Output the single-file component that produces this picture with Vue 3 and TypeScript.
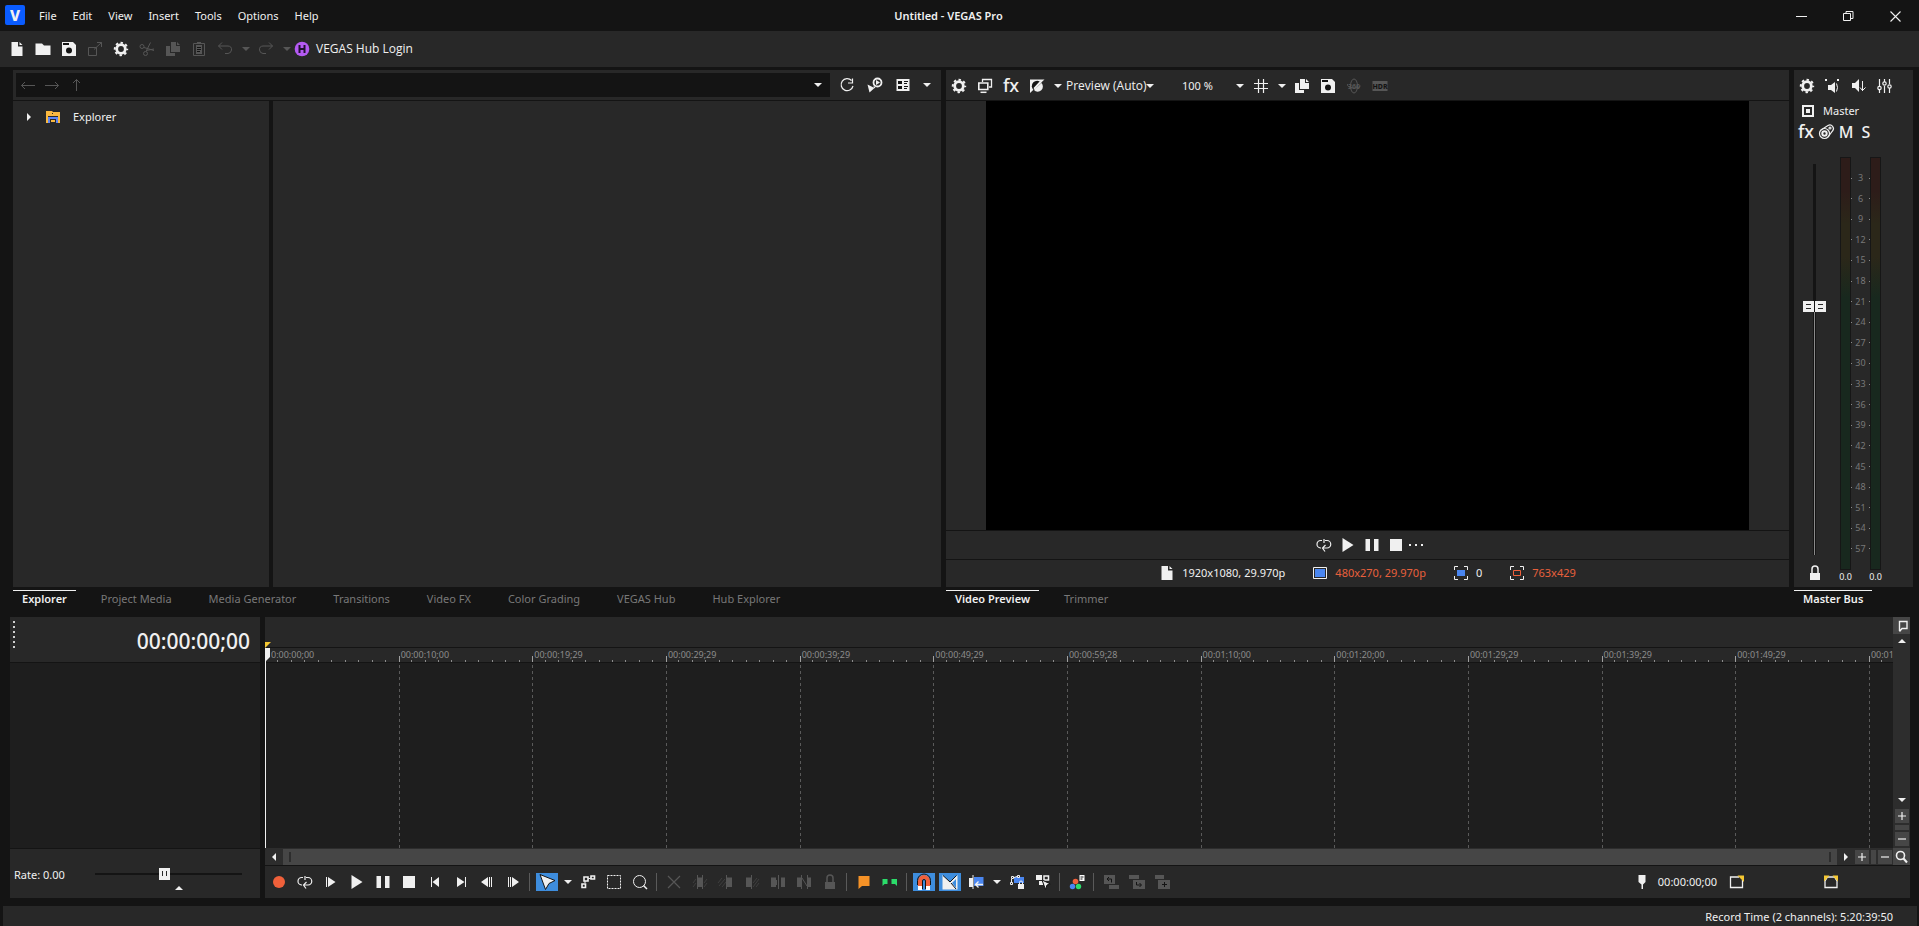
<script setup lang="ts">
import { h, ref } from 'vue'

const dark = '#141414'

const icons: Record<string, string> = {
  doc: `<path fill="currentColor" d="M2.500 1H9V5.500H13.500V15H2.500Z M10.500 1 13.500 4H10.500Z"/>`,
  folder: `<path fill="currentColor" d="M0.500 2.500H7L9 4.500H15.500V14H0.500Z"/>`,
  save: `<path fill="currentColor" d="M1 1H12L15 4V15H1Z"/><path fill="${dark}" d="M2 2H8V4H2Z"/><circle cx="8" cy="9.500" r="3" fill="${dark}"/>`,
  external: `<path fill="none" stroke="currentColor" d="M1.500 6.500h8v8h-8z M7 8.500 14.500 1.500 M10 1.500h4.500V6"/>`,
  gear: `<circle cx="8" cy="8" r="4.300" fill="none" stroke="currentColor" stroke-width="2.800"/><circle cx="8" cy="8" r="6.200" fill="none" stroke="currentColor" stroke-width="2" stroke-dasharray="2.430 2.440" stroke-dashoffset="1.215"/>`,
  cut: `<g fill="none" stroke="currentColor"><circle cx="3" cy="5.500" r="2"/><circle cx="6.500" cy="12.500" r="2"/><path d="M5 6.500 15 9.500 M7 10.500 11.500 1.500 M7 9.500 15 8"/></g>`,
  copy: `<path fill="currentColor" d="M6 1H11V5H15V11H6Z M12 1 15 4H12Z M1 5H5V12H10V15H1Z"/>`,
  paste: `<path fill="none" stroke="currentColor" d="M2.500 2.500h11v12h-11z"/><path fill="currentColor" d="M6 1h4v2H6z M5 4h6v9H5z"/><path stroke="${dark}" d="M6 6.500h4 M6 8.500h4 M6 10.500h3"/>`,
  undo: `<path fill="none" stroke="currentColor" d="M5 1.500 1.500 5 5 8.500 M1.500 5H11a3.700 3.700 0 0 1 3.500 4A4 4 0 0 1 11 12.500H8"/>`,
  redo: `<path fill="none" stroke="currentColor" d="M11 1.500 14.500 5 11 8.500 M14.500 5H5A3.700 3.700 0 0 0 1.500 9 4 4 0 0 0 5 12.500H8"/>`,
  down: `<path fill="currentColor" d="M4 6H12L8 10Z"/>`,
  up: `<path fill="currentColor" d="M4 10H12L8 6Z"/>`,
  left: `<path fill="currentColor" d="M10 4V12L6 8Z"/>`,
  right: `<path fill="currentColor" d="M6 4V12L10 8Z"/>`,
  hub: `<circle cx="8" cy="8" r="7.300" fill="#b45af2"/><path stroke="#201030" stroke-width="2" d="M5.500 4v8 M10.500 4v8 M5 8h6"/>`,
  back: `<path fill="none" stroke="currentColor" d="M15 8.500H1.500 M5 5 1.500 8.500 5 12"/>`,
  forward: `<path fill="none" stroke="currentColor" d="M1 8.500H14.500 M11 5 14.500 8.500 11 12"/>`,
  upDir: `<path fill="none" stroke="currentColor" d="M8.500 14V2.500 M5 6 8.500 2.500 12 6"/>`,
  refresh: `<path fill="none" stroke="currentColor" stroke-width="1.200" d="M12.500 3.500A6 6 0 1 0 14 9 M13.500 1.500V6H9"/>`,
  preview: `<path fill="currentColor" d="M0.500 7.500 7.500 11 2.500 15.500Z M6.500 8.500 8.500 10.500 7 11.500Z"/><circle cx="10.500" cy="5.500" r="4" fill="none" stroke="currentColor" stroke-width="1.800"/><path fill="currentColor" d="M9 3V8L13 5.500Z"/>`,
  views: `<path fill="currentColor" d="M1.500 2h13v12h-13z"/><path fill="${dark}" d="M3 4h4v3H3z M9 4h4v1H9z M9 6h3v1H9z M3 9h4v3H3z M9 9h4v1H9z M9 11h3v1H9z"/>`,
  monitor: `<path fill="none" stroke="currentColor" stroke-width="1.300" d="M5.500 4V1.500H14.500V9H12"/><path fill="none" stroke="currentColor" stroke-width="1.600" d="M1.800 5h9v6.500h-9z"/><path stroke="currentColor" stroke-width="1.500" d="M3.500 14.300h6"/>`,
  fx: `<text x="8" y="14" text-anchor="middle" font-family="Noto Sans, sans-serif" font-size="18" font-weight="500" fill="currentColor">fx</text>`,
  split: `<path fill="currentColor" d="M1 1.500H15.500L1 15Z"/><path fill="${dark}" d="M12 4.200A5.300 5.300 0 0 0 4.500 12Z"/><path fill="currentColor" d="M12.500 5A5 5 0 0 1 5 12Z M11 3 12.500 4.500 5.500 11.500 4.500 10Z"/>`,
  grid: `<path stroke="currentColor" stroke-width="1.200" d="M5.500 1v14 M10.500 1v14 M1 5.500h14 M1 10.500h14"/>`,
  vr: `<g fill="none" stroke="currentColor"><ellipse cx="8" cy="8" rx="3.500" ry="7"/><path d="M1.500 6c-1 5 11 5 13 2"/></g><text x="8" y="10.500" text-anchor="middle" font-family="Noto Sans, sans-serif" font-size="7" font-weight="700" fill="currentColor">360</text>`,
  hdr: `<path fill="currentColor" d="M0.500 3h15v10h-15z"/><text x="8" y="11" text-anchor="middle" font-family="Noto Sans, sans-serif" font-size="7" font-weight="800" fill="${dark}">HDR</text>`,
  loop: `<path fill="none" stroke="currentColor" stroke-width="1.200" d="M6 3.500H5A3.700 3.700 0 0 0 4.500 11H5 M9 3.500H11A3.700 3.700 0 0 1 11 11H7 M9.500 8 6.500 11 9 14.500 M8 2V6"/>`,
  play: `<path fill="currentColor" d="M2.500 1V15L13.500 8Z"/>`,
  pause: `<path fill="currentColor" d="M1.500 2H6V14H1.500Z M10 2H14.500V14H10Z"/>`,
  stop: `<path fill="currentColor" d="M2 2H14V14H2Z"/>`,
  dots: `<path fill="currentColor" d="M1 7h2v2H1z M7 7h2v2H7z M13 7h2v2h-2z"/>`,
  frame: `<path fill="none" stroke="currentColor" d="M1.500 2.500h13v11h-13z"/><path fill="#4a86f0" d="M3 4h10v8H3z"/>`,
  display: `<path fill="none" stroke="currentColor" d="M1.500 5V1.500H5 M11 1.500h3.500V5 M14.500 11v3.500H11 M5 14.500H1.500V11"/><path fill="#4a86f0" d="M4 5h8v6H4z"/>`,
  target: `<path fill="none" stroke="currentColor" d="M1.500 5V1.500H5 M11 1.500h3.500V5 M14.500 11v3.500H11 M5 14.500H1.500V11"/><path fill="none" stroke="#f0603a" d="M4.500 5.500h7v5h-7z"/>`,
  speaker: `<path fill="currentColor" d="M0 1h2v2H0z M12 1h2v2h-2z M3 7h3l4-3v11l-4-3H3z"/><path fill="none" stroke="currentColor" d="M11.500 5.500q2 4 0 8"/>`,
  dim: `<path fill="currentColor" d="M1 5h3l4-4v13l-4-4H1z"/><path fill="none" stroke="currentColor" d="M11.500 3v10 M9 9.500l2.500 3 3-3"/>`,
  mixer: `<g fill="none" stroke="currentColor" stroke-width="1.200"><path d="M2.500 1v7 M2.500 12v3 M7.500 1v3 M7.500 8v7 M12.500 1v5 M12.500 10v5"/><circle cx="2.500" cy="10" r="1.700"/><circle cx="7.500" cy="5.500" r="1.700"/><circle cx="12.500" cy="8.500" r="1.700"/></g>`,
  master: `<path fill="none" stroke="currentColor" stroke-width="2" d="M3 3h10v10H3z"/><path fill="currentColor" d="M6 6h4v4H6z"/>`,
  automation: `<g fill="none" stroke="currentColor" stroke-width="1.200"><circle cx="6.500" cy="9.500" r="5"/><circle cx="6.500" cy="9.500" r="2.200" stroke-width="2"/><path d="M3 6 10 1.500A3.600 3.600 0 0 1 14.500 7L10 13"/><circle cx="12" cy="4" r="1"/></g>`,
  lock: `<path fill="none" stroke="currentColor" stroke-width="1.500" d="M5 8V4a3 3 0 0 1 6 0v4"/><path fill="currentColor" d="M3 8h10v7H3z"/>`,
  record: `<circle cx="8" cy="8" r="6" fill="#f0603a"/>`,
  playStart: `<path fill="currentColor" d="M3 3h1v10H3z M5 3v10l7.500-5z"/>`,
  goStart: `<path fill="currentColor" d="M4 3h1v10H4z M12 3v10L5.500 8z"/>`,
  goEnd: `<path fill="currentColor" d="M12 3h1v10h-1z M4 3v10l7.500-5z"/>`,
  prevFrame: `<path fill="currentColor" d="M2 8 9 3v10z M10 3h1v10h-1z M12 3h1v10h-1z"/>`,
  nextFrame: `<path fill="currentColor" d="M14 8 7 3v10z M5 3h1v10H5z M3 3h1v10H3z"/>`,
  pointer: `<path fill="#f0f0f0" stroke="${dark}" d="M1 0.500 16 6.500 10 9.500 6.500 15.500Z"/>`,
  envelope: `<path fill="none" stroke="currentColor" stroke-width="1.600" d="M2 10h3.500v3.500H2z M4 3h4v4H4z M11 2h3.500v3H11z"/><path stroke="currentColor" d="M5 9V7 M8 5 11 4"/>`,
  marquee: `<path fill="none" stroke="currentColor" stroke-dasharray="2 1" d="M1.500 1.500h13v13h-13z"/>`,
  zoom: `<circle cx="7.500" cy="7.500" r="6" fill="none" stroke="currentColor"/><path stroke="currentColor" stroke-width="1.500" d="M11.500 11.500 15 15"/>`,
  remove: `<path stroke="currentColor" stroke-width="1.200" d="M2 2l12 12 M14 2 2 14"/>`,
  trim: `<path fill="currentColor" d="M5 3.500h6v9.500H5z"/><path stroke="currentColor" d="M5.500 1v14 M10.500 1v14"/><path stroke="currentColor" opacity="0.500" d="M1 9l3-4 M1 13l3-4 M12 9l3-4 M12 13l3-4"/>`,
  trimStart: `<path fill="currentColor" d="M8 3.500h6v9.500H8z"/><path stroke="currentColor" d="M8.500 1v14"/><path stroke="currentColor" opacity="0.500" d="M0 9l4-5 M1 12l6-7 M4 13l4-5"/>`,
  trimEnd: `<path fill="currentColor" d="M2 3.500h6v9.500H2z"/><path stroke="currentColor" d="M7.500 1v14"/><path stroke="currentColor" opacity="0.500" d="M9 9l4-5 M9 13l6-8 M12 13l3-4"/>`,
  cutEvent: `<path fill="currentColor" d="M1 3.500h5v9.500H1z M11 3.500h4v9.500h-4z M8 1h1v14H8z M6 6h1v5H6z"/>`,
  heal: `<path fill="currentColor" d="M1 3.500h4v9.500H1z M12 3.500h3v9.500h-3z"/><path stroke="currentColor" d="M5.500 1v14 M11.500 1v14 M6 4l5 8"/>`,
  flag: `<path fill="#f59227" d="M2.500 2H13.500V12H6L2.500 15Z"/>`,
  region: `<path fill="#2bdc6a" d="M0.500 5h5v5h-3L0.500 12Z M9.500 5H15v7l-2-2H9.500Z"/>`,
  magnet: `<path fill="none" stroke="#f0603a" stroke-width="4" d="M4 12V7a4 4 0 0 1 8 0v5"/><path fill="#fff" d="M2 12h4v4H2z M10 12h4v4h-4z"/><path fill="none" stroke="${dark}" d="M1.500 11V6.500a6.500 6.500 0 0 1 13 0V11 M6.500 15V7a1.500 1.500 0 0 1 3 0v8"/>`,
  crossfade: `<path fill="#f0f0f0" d="M0.500 1 8 8 15.500 1V15.500H0.500Z"/><path fill="none" stroke="${dark}" d="M1 1.500 8 8 14.500 1.500 M9 9 14 15"/><path fill="#3e8ddd" d="M10 9 14 5V14Z"/>`,
  ripple: `<path fill="currentColor" d="M1 4h4v9H1z M4.500 1h1v14h-1z"/><path fill="#4a86f0" d="M6 3h9.500v9H6z"/><path stroke="currentColor" stroke-width="1.300" fill="none" d="M15 10.500H7.500 M10.500 7.500 7.500 10.500 10.500 13.500"/>`,
  lockEnv: `<path fill="#4a86f0" d="M5 3h10v6H5z"/><path fill="none" stroke="currentColor" d="M1.500 8.500h2v2h-2z M2.500 2.500h2v2h-2z M8.500 1.500h2v2h-2z M2.500 8V5 M5 3.500 8 2.500"/><path fill="currentColor" d="M9 10h6v5H9z"/><path fill="none" stroke="currentColor" d="M10.500 10V8.500a1.500 1.500 0 0 1 3 0v1.500"/>`,
  groups: `<path fill="currentColor" d="M1 1h6v5H1z M4 7h4v4H4z"/><path fill="none" stroke="currentColor" stroke-width="1.500" d="M9 2h4.500v4H9z"/><path fill="currentColor" stroke="${dark}" d="M7 6 15.500 10 12 11 10.500 15.500Z"/>`,
  color: `<circle cx="6.500" cy="7.500" r="2.800" fill="#f0603a"/><circle cx="3.500" cy="12.500" r="2.700" fill="#4a86f0"/><circle cx="9.500" cy="12.500" r="2.700" fill="#2bdc6a"/><path fill="#fff" d="M10.500 1h5v6h-5z"/><path stroke="${dark}" d="M11.500 3h3 M11.500 5h2"/>`,
  groupA: `<path fill="currentColor" d="M1 1h11v9H1z M6 11h10v4H6z"/><path fill="none" stroke="${dark}" d="M8.500 8.500V5H4 M6 3 4 5l2 2"/>`,
  groupB: `<path fill="currentColor" d="M0 1h10v4H0z M4 6h12v9H4z"/><path fill="none" stroke="${dark}" d="M7.500 8v3H12 M10.500 9l2 2-2 2"/>`,
  groupC: `<path fill="currentColor" d="M0 1h9v4H0z M3 6h12v9H3z"/><path fill="none" stroke="${dark}" d="M9.500 8v5 M7 10.500h5"/>`,
  marker: `<path fill="currentColor" d="M4.500 1h7v7L9 10.500V15H7.500V10.500L4.500 8Z"/>`,
  loopEnd: `<path fill="none" stroke="currentColor" stroke-width="1.300" d="M10 3H1.500V13.500H13.500V6"/><path fill="#f5c832" d="M8.500 1.500H15V8Z"/>`,
  loopBoth: `<path fill="none" stroke="currentColor" stroke-width="1.300" d="M2 7V13.500H14V7L11.500 3H4.500Z"/><path fill="#f5c832" d="M1 1.500H6.500L1 7.500Z M9.500 1.500H15V7.500Z"/>`,
  flagLine: `<path fill="none" stroke="currentColor" stroke-width="1.400" d="M5.500 13V3.500H13V10.500H8L5.500 13.500"/>`,
  plus: `<path stroke="currentColor" stroke-width="1.200" d="M4 8h8 M8 4v8"/>`,
  minus: `<path stroke="currentColor" stroke-width="1.200" d="M4 8h8"/>`,
  magnify: `<circle cx="6.500" cy="6.500" r="4" fill="none" stroke="currentColor" stroke-width="1.600"/><path stroke="currentColor" stroke-width="2" d="M9.500 9.500 13 13.500"/>`,
  winMin: `<path stroke="currentColor" d="M2 8.500h11"/>`,
  winRestore: `<path fill="none" stroke="currentColor" d="M2.500 5.500h7v7h-7z M5 5V3.500h7v7h-2"/>`,
  winClose: `<path stroke="currentColor" stroke-width="1.100" d="M2.500 3.500l10 10 M12.500 3.500l-10 10"/>`,
  treeFolder: `<path fill="#f9b840" d="M1 2h6l1 1h7v11H1z"/><path fill="#282828" d="M3 7h10v7H3z M7 4h1v1H7z"/><path fill="none" stroke="#5f86f2" stroke-width="2" d="M4 14V9h8v5"/><path fill="#f9b840" d="M6 11h4v2H6z"/>`,
}

const Icon = (props: { name: string }) =>
  h('svg', { class: 'icon', viewBox: '0 0 16 16', 'aria-hidden': 'true', innerHTML: icons[props.name] })
Icon.props = ['name']

interface Tool {
  icon: string
  label: string
  off?: boolean
  on?: boolean
  kind?: 'sep' | 'arrow'
}

const sep: Tool = { icon: '', label: '', kind: 'sep' }
const menu = ['File', 'Edit', 'View', 'Insert', 'Tools', 'Options', 'Help']

const mainTools: Tool[] = [
  { icon: 'doc', label: 'New project' },
  { icon: 'folder', label: 'Open' },
  { icon: 'save', label: 'Save' },
  { icon: 'external', label: 'Render as', off: true },
  { icon: 'gear', label: 'Properties' },
  { icon: 'cut', label: 'Cut', off: true },
  { icon: 'copy', label: 'Copy', off: true },
  { icon: 'paste', label: 'Paste', off: true },
  { icon: 'undo', label: 'Undo', off: true },
  { icon: 'down', label: 'Undo history', kind: 'arrow', off: true },
  { icon: 'redo', label: 'Redo', off: true },
  { icon: 'down', label: 'Redo history', kind: 'arrow', off: true },
]

const previewTools: Tool[] = [
  { icon: 'gear', label: 'Preview properties' },
  { icon: 'monitor', label: 'External monitor' },
  { icon: 'fx', label: 'Output FX' },
  { icon: 'split', label: 'Split screen' },
  { icon: 'down', label: 'Split screen options', kind: 'arrow' },
]

const overlayTools: Tool[] = [
  { icon: 'grid', label: 'Overlays' },
  { icon: 'down', label: 'Overlay options', kind: 'arrow' },
  { icon: 'copy', label: 'Copy snapshot' },
  { icon: 'save', label: 'Save snapshot' },
  { icon: 'vr', label: '360 preview', off: true },
  { icon: 'hdr', label: 'HDR preview', off: true },
]

const previewTransport: Tool[] = [
  { icon: 'loop', label: 'Loop' },
  { icon: 'play', label: 'Play' },
  { icon: 'pause', label: 'Pause' },
  { icon: 'stop', label: 'Stop' },
]

const masterTools: Tool[] = [
  { icon: 'gear', label: 'Audio properties' },
  { icon: 'speaker', label: 'Downmix' },
  { icon: 'dim', label: 'Dim output' },
  { icon: 'mixer', label: 'Mixing console' },
]

const timelineTools: Tool[] = [
  { icon: 'record', label: 'Record' },
  { icon: 'loop', label: 'Loop playback' },
  { icon: 'playStart', label: 'Play from start' },
  { icon: 'play', label: 'Play' },
  { icon: 'pause', label: 'Pause' },
  { icon: 'stop', label: 'Stop' },
  { icon: 'goStart', label: 'Go to start' },
  { icon: 'goEnd', label: 'Go to end' },
  { icon: 'prevFrame', label: 'Previous frame' },
  { icon: 'nextFrame', label: 'Next frame' },
  sep,
  { icon: 'pointer', label: 'Normal edit tool', on: true },
  { icon: 'down', label: 'Edit tools', kind: 'arrow' },
  { icon: 'envelope', label: 'Envelope edit tool' },
  { icon: 'marquee', label: 'Selection edit tool' },
  { icon: 'zoom', label: 'Zoom edit tool' },
  sep,
  { icon: 'remove', label: 'Delete', off: true },
  { icon: 'trim', label: 'Trim', off: true },
  { icon: 'trimStart', label: 'Trim start', off: true },
  { icon: 'trimEnd', label: 'Trim end', off: true },
  { icon: 'cutEvent', label: 'Split', off: true },
  { icon: 'heal', label: 'Heal', off: true },
  { icon: 'lock', label: 'Lock event', off: true },
  sep,
  { icon: 'flag', label: 'Insert marker' },
  { icon: 'region', label: 'Insert region' },
  sep,
  { icon: 'magnet', label: 'Enable snapping', on: true },
  { icon: 'crossfade', label: 'Automatic crossfades', on: true },
  { icon: 'ripple', label: 'Auto ripple' },
  { icon: 'down', label: 'Ripple options', kind: 'arrow' },
  { icon: 'lockEnv', label: 'Lock envelopes to events' },
  { icon: 'groups', label: 'Ignore event grouping' },
  sep,
  { icon: 'color', label: 'Color grading' },
  sep,
  { icon: 'groupA', label: 'Move out of group', off: true },
  { icon: 'groupB', label: 'Move into group', off: true },
  { icon: 'groupC', label: 'Create group', off: true },
]

const browserTabs = ['Explorer', 'Project Media', 'Media Generator', 'Transitions', 'Video FX', 'Color Grading', 'VEGAS Hub', 'Hub Explorer']
const previewTabs = ['Video Preview', 'Trimmer']

const times = [
  '00:00:00;00', '00:00:10;00', '00:00:19;29', '00:00:29;29', '00:00:39;29', '00:00:49;29', '00:00:59;28',
  '00:01:10;00', '00:01:20;00', '00:01:29;29', '00:01:39;29', '00:01:49;29', '00:01:59;28',
]
const levels = Array.from({ length: 19 }, (_, i) => (i + 1) * 3)

const address = ref('')
const quality = ref('Preview (Auto)')
const zoomLevel = ref('100 %')
const volume = ref(64)
const rate = ref(47)
</script>

<template>
  <div class="app">
    <header class="titlebar">
      <span class="logo">V</span>
      <nav class="menu">
        <button v-for="m in menu" :key="m" type="button">{{ m }}</button>
      </nav>
      <h1>Untitled - VEGAS Pro</h1>
      <div class="window-buttons">
        <button type="button" aria-label="Minimize"><Icon name="winMin" /></button>
        <button type="button" aria-label="Restore"><Icon name="winRestore" /></button>
        <button type="button" aria-label="Close"><Icon name="winClose" /></button>
      </div>
    </header>

    <div class="toolbar">
      <button v-for="t in mainTools" :key="t.label" type="button" class="tool" :class="t.kind" :disabled="t.off" :aria-label="t.label">
        <Icon :name="t.icon" />
      </button>
      <button type="button" class="hub"><Icon name="hub" />VEGAS Hub Login</button>
    </div>

    <main class="docks">
      <section class="dock browser">
        <div class="panel">
          <div class="panel-bar address-bar">
            <div class="address">
              <button type="button" class="tool" disabled aria-label="Back"><Icon name="back" /></button>
              <button type="button" class="tool" disabled aria-label="Forward"><Icon name="forward" /></button>
              <button type="button" class="tool" disabled aria-label="Up one level"><Icon name="upDir" /></button>
              <input v-model="address" type="text" aria-label="Address" />
              <button type="button" class="tool arrow" aria-label="Recent locations"><Icon name="down" /></button>
            </div>
            <button type="button" class="tool" aria-label="Refresh"><Icon name="refresh" /></button>
            <button type="button" class="tool" aria-label="Auto preview"><Icon name="preview" /></button>
            <button type="button" class="tool" aria-label="Views"><Icon name="views" /></button>
            <button type="button" class="tool arrow" aria-label="View options"><Icon name="down" /></button>
          </div>
          <div class="browser-body">
            <div class="tree">
              <button type="button" class="tree-row"><Icon name="right" /><Icon name="treeFolder" /><span>Explorer</span></button>
            </div>
            <div class="files"></div>
          </div>
        </div>
        <nav class="tabs">
          <button v-for="(t, i) in browserTabs" :key="t" type="button" :class="{ active: i === 0 }">{{ t }}</button>
        </nav>
      </section>

      <section class="dock preview">
        <div class="panel">
          <div class="panel-bar">
            <button v-for="t in previewTools" :key="t.label" type="button" class="tool" :class="t.kind" :aria-label="t.label">
              <Icon :name="t.icon" />
            </button>
            <span class="select quality">
              <select v-model="quality" aria-label="Preview quality"><option>Preview (Auto)</option><option>Best (Full)</option></select>
              <Icon name="down" />
            </span>
            <span class="select zoom">
              <select v-model="zoomLevel" aria-label="Preview zoom"><option>100 %</option><option>50 %</option></select>
              <Icon name="down" />
            </span>
            <button v-for="t in overlayTools" :key="t.label" type="button" class="tool" :class="t.kind" :disabled="t.off" :aria-label="t.label">
              <Icon :name="t.icon" />
            </button>
          </div>
          <div class="stage"><div class="video"></div></div>
          <div class="preview-transport">
            <button v-for="t in previewTransport" :key="t.label" type="button" class="tool" :aria-label="t.label"><Icon :name="t.icon" /></button>
            <button type="button" class="tool more" aria-label="More"><Icon name="dots" /></button>
          </div>
          <div class="preview-info">
            <span><Icon name="doc" />1920x1080, 29.970p</span>
            <span class="warn"><Icon name="frame" />480x270, 29.970p</span>
            <span><Icon name="display" />0</span>
            <span class="warn"><Icon name="target" />763x429</span>
          </div>
        </div>
        <nav class="tabs">
          <button v-for="(t, i) in previewTabs" :key="t" type="button" :class="{ active: i === 0 }">{{ t }}</button>
        </nav>
      </section>

      <section class="dock master">
        <div class="panel">
          <div class="panel-bar">
            <button v-for="t in masterTools" :key="t.label" type="button" class="tool" :aria-label="t.label"><Icon :name="t.icon" /></button>
          </div>
          <div class="master-name"><Icon name="master" />Master</div>
          <div class="master-buttons">
            <button type="button" aria-label="Master FX"><Icon name="fx" /></button>
            <button type="button" aria-label="Automation"><Icon name="automation" /></button>
            <button type="button">M</button>
            <button type="button">S</button>
          </div>
          <div class="mixer">
            <div class="fader-column">
              <input v-model="volume" class="fader" type="range" min="0" max="100" aria-label="Master volume" />
              <button type="button" aria-label="Lock faders"><Icon name="lock" /></button>
            </div>
            <div class="meter"></div>
            <ol class="scale">
              <li v-for="l in levels" :key="l">{{ l }}</li>
            </ol>
            <div class="meter"></div>
            <span class="peak">0.0</span>
            <span></span>
            <span class="peak">0.0</span>
          </div>
        </div>
        <nav class="tabs"><button type="button" class="active">Master Bus</button></nav>
      </section>
    </main>

    <section class="timeline">
      <div class="track-list">
        <div class="timecode"><span class="grip"></span>00:00:00;00</div>
        <div class="track-headers"></div>
        <div class="rate">
          <label for="rate">Rate: 0.00</label>
          <div class="rate-slider">
            <input id="rate" v-model="rate" type="range" min="0" max="100" />
            <Icon name="up" />
          </div>
        </div>
      </div>

      <div class="track-view">
        <div class="lanes">
          <div class="marker-bar"></div>
          <div class="ruler">
            <div v-for="(t, i) in times" :key="t" class="segment">
              <span class="time">{{ i === 0 ? t.slice(1) : t }}</span>
              <span class="ticks"><i v-for="n in 9" :key="n"></i></span>
            </div>
          </div>
          <div class="tracks">
            <div v-for="t in times" :key="t" class="column"></div>
          </div>
          <div class="cursor">
            <svg viewBox="0 0 7 22" aria-hidden="true">
              <path fill="#f5c832" d="M0 1H6L0 7Z" />
              <path fill="#f0f0f0" d="M0 7H5V16L1 20H0Z" />
            </svg>
          </div>
        </div>
        <div class="vscroll">
          <button type="button" class="raised" aria-label="Marker tool"><Icon name="flagLine" /></button>
          <button type="button" aria-label="Scroll up"><Icon name="up" /></button>
          <span class="space"></span>
          <button type="button" aria-label="Scroll down"><Icon name="down" /></button>
          <button type="button" class="square first" aria-label="Zoom in tracks"><Icon name="plus" /></button>
          <span class="strip"></span>
          <button type="button" class="square" aria-label="Zoom out tracks"><Icon name="minus" /></button>
        </div>
        <div class="hscroll">
          <button type="button" aria-label="Scroll left"><Icon name="left" /></button>
          <div class="track"></div>
          <button type="button" aria-label="Scroll right"><Icon name="right" /></button>
          <button type="button" class="square" aria-label="Zoom in time"><Icon name="plus" /></button>
          <span class="strip"></span>
          <button type="button" class="square" aria-label="Zoom out time"><Icon name="minus" /></button>
        </div>
        <button type="button" class="corner" aria-label="Zoom tool"><Icon name="magnify" /></button>
        <div class="transport">
          <template v-for="(t, i) in timelineTools" :key="i">
            <span v-if="t.kind === 'sep'" class="sep"></span>
            <button v-else type="button" class="tool" :class="[t.kind, { on: t.on }]" :disabled="t.off" :aria-label="t.label">
              <Icon :name="t.icon" />
            </button>
          </template>
          <div class="position">
            <Icon name="marker" />
            <span>00:00:00;00</span>
            <Icon name="loopEnd" />
            <Icon name="loopBoth" class="last" />
          </div>
        </div>
      </div>
    </section>

    <footer class="status">Record Time (2 channels): 5:20:39:50</footer>
  </div>
</template>

<style>
html,
body {
  background: #141414;
}
</style>

<style scoped>
.app,
.app * {
  box-sizing: border-box;
}
.app {
  display: flex;
  flex-direction: column;
  min-width: 1280px;
  height: 100vh;
  min-height: 720px;
  background: #141414;
  color: #f0f0f0;
  font: 11px/16px 'Noto Sans', 'Open Sans', sans-serif;
  overflow: hidden;
}
button {
  display: flex;
  align-items: center;
  justify-content: center;
  margin: 0;
  padding: 0;
  border: 0;
  background: none;
  color: inherit;
  font: inherit;
}
.icon {
  display: block;
  flex: none;
  width: 16px;
  height: 16px;
  overflow: visible;
}

.titlebar {
  display: grid;
  grid-template-columns: 1fr auto 1fr;
  grid-template-rows: 31px;
  align-items: center;
  position: relative;
}
.titlebar h1 {
  grid-column: 2;
  margin: 0;
  padding-right: 22px;
  font-size: 11px;
  font-weight: 600;
}
.logo {
  position: absolute;
  left: 5px;
  top: 5px;
  width: 20px;
  height: 20px;
  border-radius: 2px;
  background: #0a5cff;
  font-size: 15px;
  font-weight: 800;
  line-height: 20px;
  text-align: center;
}
.menu {
  display: flex;
  grid-row: 1;
  padding-left: 31px;
}
.menu button {
  padding: 0 8px;
}
.window-buttons {
  display: flex;
  justify-content: flex-end;
}
.window-buttons button {
  width: 47px;
  height: 31px;
}

.toolbar {
  display: flex;
  align-items: center;
  flex: none;
  height: 36px;
  padding-left: 4px;
  background: #282828;
}
.tool {
  flex: none;
  width: 26px;
  height: 18px;
}
.tool.arrow {
  width: 15px;
}
.tool:disabled {
  color: #565656;
}
.hub,
.quality {
  font-family: 'Open Sans', sans-serif;
  font-size: 12px;
}
.hub {
  gap: 6px;
}

.docks {
  display: flex;
  flex: 1;
  gap: 5px;
  min-height: 0;
  padding: 3px 6px 0 13px;
}
.dock {
  display: flex;
  flex-direction: column;
  min-width: 0;
}
.browser {
  flex: 928;
}
.preview {
  flex: 843;
}
.master {
  flex: none;
  width: 119px;
}
.panel {
  display: flex;
  flex: 1;
  flex-direction: column;
  min-height: 0;
  background: #282828;
}
.panel-bar {
  display: flex;
  align-items: center;
  flex: none;
  height: 31px;
  padding-top: 1px;
  border-bottom: 1px solid #141414;
}
.address-bar {
  padding: 0 4px 0 3px;
}
.address {
  display: flex;
  align-items: center;
  flex: 1;
  height: 24px;
  margin-right: 3px;
  padding-right: 4px;
  background: #141414;
}
.address .tool {
  width: 24px;
}
.address .tool.arrow {
  width: 16px;
}
.address input {
  flex: 1;
  min-width: 0;
  border: 0;
  outline: 0;
  background: none;
  color: inherit;
  font: inherit;
}
.address-bar > .tool {
  width: 28px;
}
.address-bar > .tool.arrow {
  width: 20px;
}
.browser-body {
  display: flex;
  flex: 1;
  gap: 4px;
  background: #141414;
}
.tree,
.files {
  background: #282828;
}
.tree {
  width: 256px;
  padding-top: 8px;
}
.files {
  flex: 1;
}
.tree-row {
  height: 16px;
  padding-left: 8px;
}
.tree-row .icon + .icon {
  margin: 0 12px 0 8px;
}

.tabs {
  display: flex;
  align-items: flex-start;
  flex: none;
  gap: 19px;
  height: 30px;
  padding-top: 3px;
  color: #787878;
}
.tabs button {
  padding: 0 9px;
  border-top: 1px solid transparent;
  white-space: nowrap;
}
.tabs .active {
  margin-right: -3px;
  border-color: #f0f0f0;
  color: #f0f0f0;
  font-weight: 600;
}

.select {
  display: flex;
  align-items: center;
  flex: none;
}
.select select {
  appearance: none;
  flex: 1;
  min-width: 0;
  margin: 0;
  padding: 0;
  border: 0;
  outline: 0;
  background: none;
  color: inherit;
  font: inherit;
}
.quality {
  width: 92px;
  margin-left: 1px;
}
.quality select {
  margin-right: -8px;
}
.zoom {
  width: 66px;
  margin-left: 24px;
}
.stage {
  display: flex;
  flex: 1;
  justify-content: center;
  min-height: 0;
}
.video {
  height: 100%;
  max-width: 100%;
  aspect-ratio: 763 / 429;
  background: #000;
}
.preview-transport,
.preview-info {
  display: flex;
  align-items: center;
  justify-content: center;
  flex: none;
  border-top: 1px solid #141414;
}
.preview-transport {
  height: 29px;
}
.preview-transport .tool {
  width: 24px;
}
.preview-transport .more {
  width: 16px;
}
.preview-info {
  gap: 27px;
  height: 28px;
  padding-bottom: 2px;
}
.preview-info span {
  display: flex;
  align-items: center;
  gap: 7px;
  white-space: nowrap;
}
.preview-info .warn {
  color: #e8603c;
}
.preview-info .icon {
  color: #f0f0f0;
}

.master .panel-bar {
  border-color: transparent;
}
.master-name {
  display: flex;
  align-items: center;
  gap: 7px;
  height: 20px;
  padding-left: 6px;
}
.master-buttons {
  display: flex;
  height: 22px;
  padding-left: 2px;
}
.master-buttons button {
  width: 20px;
  font-size: 16px;
  font-weight: 500;
  line-height: 22px;
}
.mixer {
  display: grid;
  flex: 1;
  grid-template-columns: 41px 5px 11px 19px 11px;
  grid-template-rows: 1fr 17px;
  min-height: 0;
  margin-top: 14px;
}
.fader-column {
  display: flex;
  flex-direction: column;
  align-items: center;
  grid-row: 1 / 3;
  gap: 10px;
  min-height: 0;
  padding: 7px 0 6px;
}
.fader-column + .meter,
.scale + .meter + .peak {
  grid-column: 3;
}
.peak {
  justify-self: center;
  font-size: 9px;
  line-height: 14px;
}
.fader {
  flex: 1;
  width: 23px;
  min-height: 0;
  margin: 0;
  appearance: none;
  writing-mode: vertical-lr;
  direction: rtl;
  background:
    linear-gradient(#8a8a8a, #8a8a8a) 11px 100% / 1px 63% no-repeat,
    linear-gradient(#141414, #141414) 10px 0 / 3px 100% no-repeat;
}
.fader::-webkit-slider-thumb {
  appearance: none;
  width: 23px;
  height: 11px;
  background:
    linear-gradient(#141414, #141414) 11px 0 / 1px 11px no-repeat,
    linear-gradient(#282828, #282828) 3px 3px / 5px 1px no-repeat,
    linear-gradient(#282828, #282828) 3px 7px / 5px 1px no-repeat,
    linear-gradient(#282828, #282828) 15px 3px / 5px 1px no-repeat,
    linear-gradient(#282828, #282828) 15px 7px / 5px 1px no-repeat,
    #f0f0f0;
}
.meter {
  border: 1px solid #161616;
  background: linear-gradient(#2d1c19 8%, #2b2719 16%, #2b2719 24%, #18281e 34%);
}
.scale {
  display: flex;
  flex-direction: column;
  justify-content: space-between;
  margin: 0;
  padding: 15px 0;
  color: #787878;
  font-size: 9px;
  line-height: 12px;
  list-style: none;
}
.scale li {
  display: flex;
  align-items: center;
  justify-content: space-between;
}
.scale li::before,
.scale li::after {
  width: 1px;
  height: 1px;
  background: #8a8a8a;
  content: '';
}

.timeline {
  display: flex;
  flex: none;
  gap: 5px;
  padding: 0 9px 0 10px;
}
.track-list {
  display: flex;
  flex: none;
  flex-direction: column;
  width: 250px;
  background: #282828;
}
.timecode {
  display: flex;
  align-items: center;
  justify-content: space-between;
  height: 46px;
  padding: 2px 10px 0 3px;
  border-bottom: 1px solid #141414;
  font-size: 21px;
  font-weight: 500;
}
.grip {
  align-self: flex-start;
  width: 2px;
  height: 27px;
  margin-top: 2px;
  background: repeating-linear-gradient(#d0d0d0 0 2px, transparent 2px 5px);
}
.track-headers {
  flex: 1;
  background: #1e1e1e;
}
.rate {
  display: flex;
  align-items: center;
  gap: 30px;
  height: 50px;
  padding: 2px 18px 0 4px;
  border-top: 1px solid #141414;
}
.rate-slider {
  display: flex;
  flex: 1;
  flex-direction: column;
  align-items: center;
  padding-top: 14px;
}
.rate-slider .icon {
  margin-left: 22px;
}
.rate-slider input {
  width: 100%;
  height: 12px;
  margin: 0;
  appearance: none;
  background: linear-gradient(#141414, #141414) 0 5px / 100% 2px no-repeat;
}
.rate-slider input::-webkit-slider-thumb {
  appearance: none;
  width: 11px;
  height: 12px;
  background:
    linear-gradient(#282828, #282828) 3px 3px / 1px 5px no-repeat,
    linear-gradient(#282828, #282828) 7px 3px / 1px 5px no-repeat,
    #f0f0f0;
}

.track-view {
  display: grid;
  flex: 1;
  grid-template-columns: minmax(0, 1fr) 17px;
  grid-template-rows: 231px 18px 32px;
  min-width: 0;
  background: #282828;
}
.lanes {
  display: flex;
  flex-direction: column;
  position: relative;
  overflow: hidden;
}
.marker-bar {
  height: 31px;
  border-bottom: 1px solid #141414;
}
.ruler {
  display: flex;
  flex: none;
  height: 15px;
  border-bottom: 1px solid #141414;
  color: #8c8c8c;
  font-size: 9px;
  line-height: 14px;
}
.segment,
.column {
  flex: 0 0 8.21%;
}
.segment {
  display: grid;
  grid-template-rows: 12px 2px;
  background: linear-gradient(#a0a0a0, #a0a0a0) 0 100% / 1px 6px no-repeat;
}
.time {
  padding-left: 2px;
  white-space: nowrap;
}
.segment:first-child .time {
  padding-left: 6px;
}
.ticks {
  display: flex;
  justify-content: space-evenly;
}
.ticks i {
  width: 1px;
  background: #8c8c8c;
}
.tracks {
  display: flex;
  flex: 1;
  padding-top: 2px;
  background: #1e1e1e;
}
.column {
  background: repeating-linear-gradient(#5a5a5a 0 3px, transparent 3px 6px) 0 0 / 1px 100% no-repeat;
}
.cursor {
  position: absolute;
  top: 24px;
  bottom: 0;
  left: 0;
  width: 7px;
  background: linear-gradient(#f0f0f0, #f0f0f0) 0 20px / 1px 100% no-repeat;
}
.cursor svg {
  display: block;
  width: 7px;
  height: 22px;
}
.vscroll,
.hscroll {
  display: flex;
  align-items: center;
  background: #2d2d2d;
}
.vscroll {
  flex-direction: column;
  padding-bottom: 2px;
}
.vscroll button {
  flex: none;
  width: 17px;
  height: 14px;
  overflow: hidden;
}
.vscroll .raised {
  height: 17px;
}
.vscroll .raised,
.corner {
  background: #464646;
}
.vscroll .space {
  flex: 1;
}
.vscroll .square,
.hscroll .square {
  width: 14px;
  height: 14px;
  background: #464646;
}
.vscroll .first {
  margin-top: 2px;
}
.vscroll .strip {
  width: 14px;
  height: 5px;
  margin: 2px 0;
  background: #464646;
}
.hscroll {
  padding-right: 1px;
  border-bottom: 1px solid #141414;
}
.hscroll button {
  flex: none;
  width: 18px;
  overflow: hidden;
}
.hscroll .track {
  flex: 1;
  height: 16px;
  background:
    linear-gradient(#2d2d2d, #2d2d2d) 6px 3px / 2px 10px no-repeat,
    linear-gradient(#2d2d2d, #2d2d2d) calc(100% - 6px) 3px / 2px 10px no-repeat,
    #464646;
}
.hscroll .strip {
  width: 5px;
  height: 14px;
  margin: 0 2px;
  background: #464646;
}
.corner {
  border-bottom: 1px solid #141414;
}
.transport {
  display: flex;
  align-items: center;
  grid-column: 1 / 3;
  padding-left: 1px;
}
.transport .on {
  width: 22px;
  margin: 0 2px;
  background: #3e8ddd;
}
.sep {
  flex: none;
  width: 1px;
  height: 18px;
  margin: 0 4px 0 3px;
  background: #5a5a5a;
}
.position {
  display: flex;
  align-items: center;
  margin-left: auto;
  padding-right: 71px;
}
.position span {
  margin: 0 12px 0 8px;
}
.position .last {
  margin-left: 78px;
}

.status {
  flex: none;
  height: 20px;
  margin: 8px 2px 0 3px;
  padding: 3px 24px 0 0;
  background: #282828;
  text-align: right;
}
</style>
